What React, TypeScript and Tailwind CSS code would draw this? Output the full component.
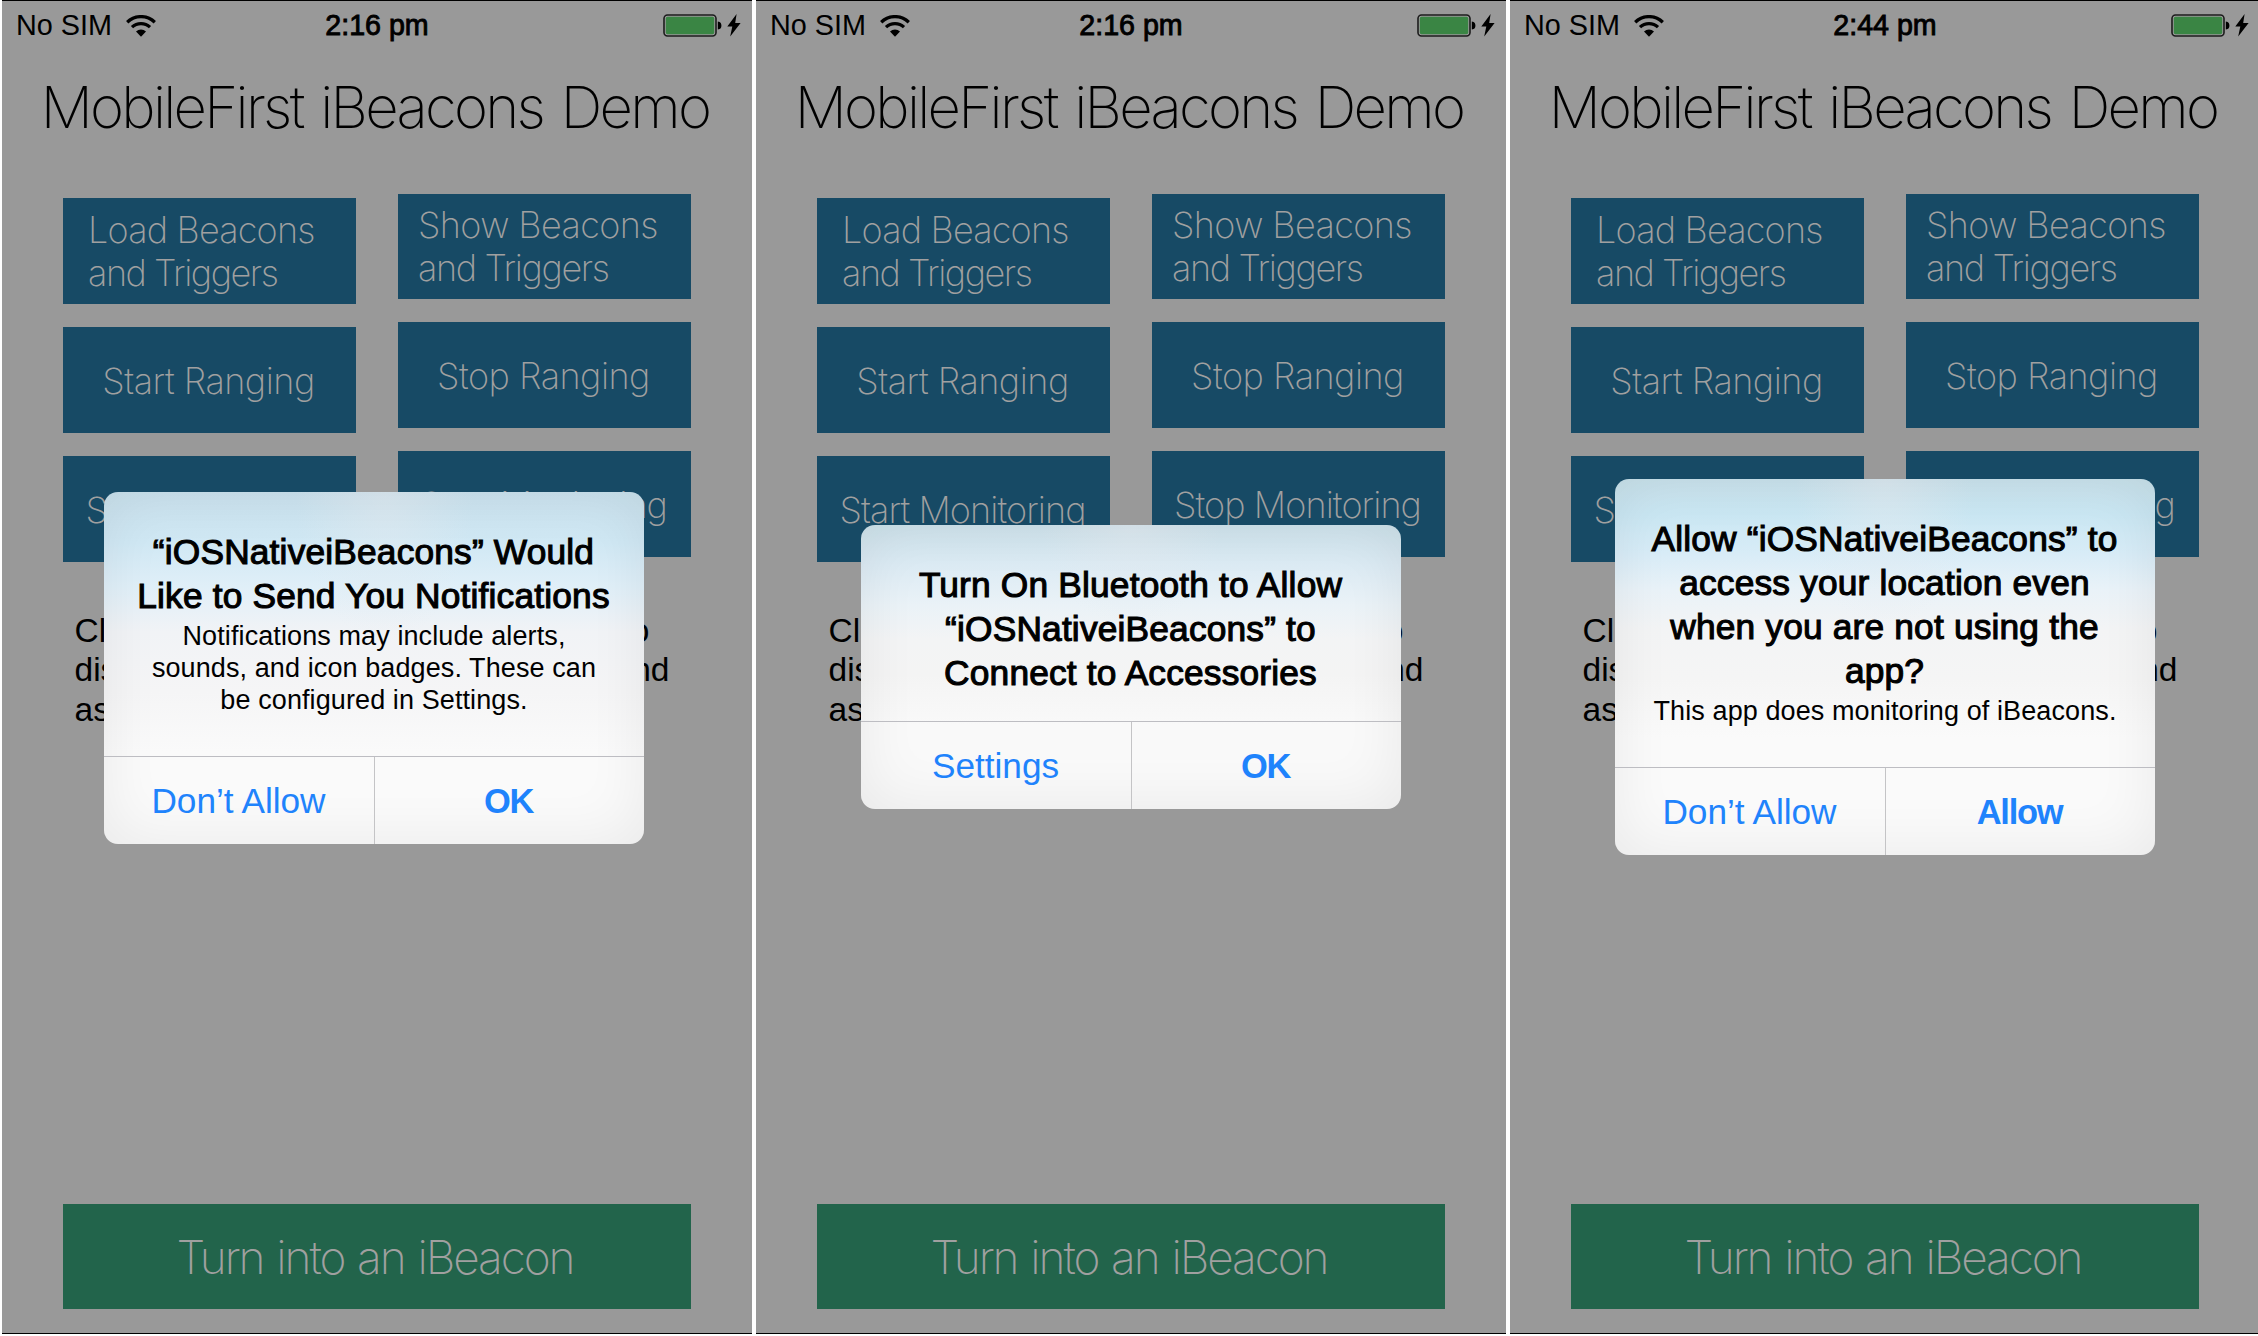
import type { ReactNode } from "react";

function StatusBar({ time }: { time: string }) {
  return (
    <div className="relative flex h-[49px] items-center justify-between pr-[11.5px] pl-[14px] text-[28.8px] leading-[49px]">
      <div className="flex items-center">
        <span>No SIM</span>
        <svg className="ml-[14px] block h-[22px] w-[30px]" viewBox="0 0 30 22">
          <path d="M1.2 7.2a19.8 19.8 0 0 1 27.6 0" fill="none" stroke="black" strokeWidth="3.3" />
          <path d="M6 12.2a13 13 0 0 1 18 0" fill="none" stroke="black" strokeWidth="3.2" />
          <path d="M10 16.6a7.2 7.2 0 0 1 10 0L15 21.8z" fill="black" />
        </svg>
      </div>
      <div className="absolute inset-x-0 text-center text-[28.6px] [-webkit-text-stroke:0.9px_black]">{time}</div>
      <div className="flex items-center">
        <svg className="block h-[23px] w-[59px]" viewBox="0 0 59 23">
          <rect x="1" y="1" width="52" height="21" rx="3.5" fill="#999999" stroke="#1c1c1c" strokeWidth="1.6" />
          <rect x="2.8" y="2.8" width="48.4" height="17.4" rx="1.6" fill="#3a8544" />
          <path d="M54.8 7.4c3 .4 3.6 2 3.6 4.1s-.6 3.7-3.6 4.1z" fill="black" />
        </svg>
        <svg className="ml-[5px] block h-[23px] w-[14px]" viewBox="0 0 14 23">
          <path d="M9.6 0 0.3 12.6h5L3.2 22.6 13.6 9h-5.4z" fill="black" />
        </svg>
      </div>
    </div>
  );
}

function TwoLineButton({ className, children }: { className: string; children: ReactNode }) {
  return <div className={`bg-[#174a65] text-left leading-[43px] ${className}`}>{children}</div>;
}

function BlueButton({ className, label }: { className: string; label: string }) {
  return (
    <div className="flex h-[106px] items-center justify-center bg-[#174a65] pt-[2px] pr-[2px] leading-[43px]">
      <span className={className}>{label}</span>
    </div>
  );
}

function Phone({ time, children }: { time: string; children: ReactNode }) {
  return (
    <section className="relative flex h-[1334px] w-[750px] shrink-0 flex-col overflow-hidden border-y border-black bg-[#999999]">
      <StatusBar time={time} />
      <h1 className="mt-[18px] h-[79px] pr-[4px] text-center font-['Inter',sans-serif] text-[58px] leading-[79px] font-[170] tracking-[-2.7px] [word-spacing:4px] whitespace-nowrap">
        MobileFirst iBeacons Demo
      </h1>
      <div className="flex items-start gap-[42px] pl-[61px] font-['Inter',sans-serif] text-[36px] font-[150] whitespace-nowrap text-[#a0a0a0]">
        <div className="mt-[51px] flex w-[293px] flex-col gap-[23px]">
          <TwoLineButton className="h-[106px] pt-[11px] pl-[25px]">
            <div className="tracking-[-0.8px]">Load Beacons</div>
            <div className="tracking-[-1.45px]">and Triggers</div>
          </TwoLineButton>
          <BlueButton className="tracking-[-0.5px]" label="Start Ranging" />
          <BlueButton className="tracking-[-0.9px]" label="Start Monitoring" />
        </div>
        <div className="mt-[47px] flex w-[293px] flex-col gap-[23px]">
          <TwoLineButton className="h-[105px] pt-[10px] pl-[20px]">
            <div className="tracking-[-0.6px]">Show Beacons</div>
            <div className="tracking-[-1.35px]">and Triggers</div>
          </TwoLineButton>
          <BlueButton className="tracking-[-0.5px]" label="Stop Ranging" />
          <BlueButton className="tracking-[-0.9px]" label="Stop Monitoring" />
        </div>
      </div>
      <div className="mt-[49px] ml-[72.5px] text-[33.5px] leading-[39.4px]">
        <div className="w-[575px] [text-align-last:justify]">Click on the Load Beacons buttons to</div>
        <div className="w-[595px] [text-align-last:justify]">discover the iBeacons around you and</div>
        <div>associated triggers.</div>
      </div>
      <div className="mt-auto mb-[24px] ml-[61px] flex h-[105px] w-[628px] items-center justify-center bg-[#22644b] pr-[4px] font-['Inter',sans-serif] text-[46px] leading-[60px] font-[150] tracking-[-2.1px] [word-spacing:2px] whitespace-nowrap text-[#a0a0a0]">
        Turn into an iBeacon
      </div>
      {children}
    </section>
  );
}

type AlertProps = {
  place: string;
  tint: string;
  title: string[];
  message?: string[];
  cancel: string;
  confirm: string;
};

function Alert({ place, tint, title, message = [], cancel, confirm }: AlertProps) {
  return (
    <div
      className={`absolute flex w-[540px] flex-col overflow-hidden rounded-[14px] text-center whitespace-nowrap text-black ${place} ${tint}`}
    >
      <div className="flex-1 pt-[38px]">
        {title.map((line) => (
          <div key={line} className="h-[44px] pr-[1px] text-[35.3px] leading-[44px] tracking-[0.18px] [-webkit-text-stroke:1.1px_black]">
            {line}
          </div>
        ))}
        <div className="pt-[2px] text-[27px] leading-[32px] tracking-[0.1px]">
          {message.map((line) => (
            <div key={line}>{line}</div>
          ))}
        </div>
      </div>
      <div className="flex h-[88px] border-t border-[#bdbdc2] text-[35.2px] leading-[87px] text-[#1f83fc]">
        <div className="w-[271px] border-r border-[#c4c4c6] pr-[1px]">{cancel}</div>
        <div className="flex-1 pt-px pr-[2px] text-[34.5px] font-bold tracking-[-1.3px]">{confirm}</div>
      </div>
    </div>
  );
}

export default function App() {
  return (
    <main className="flex h-[1336px] w-[2258px] gap-[4px] overflow-hidden bg-white pl-[2px] font-['Liberation_Sans',Arial,sans-serif] text-black">
      <Phone time="2:16 pm">
        <Alert
          place="left-[102px] top-[491px] h-[352px]"
          tint="shadow-[inset_0_0_60px_rgba(0,0,0,0.07)] bg-[radial-gradient(ellipse_90px_150px_at_52%_0,rgba(226,234,240,0.6),transparent),linear-gradient(180deg,#cae2ee_0,#d0e8f4_50px,#e0eff8_95px,#f1f3f6_140px,#f5f5f6_200px,#fafafa_260px,#fafafa_100%)]"
          title={["“iOSNativeiBeacons” Would", "Like to Send You Notifications"]}
          message={["Notifications may include alerts,", "sounds, and icon badges. These can", "be configured in Settings."]}
          cancel="Don’t Allow"
          confirm="OK"
        />
      </Phone>
      <Phone time="2:16 pm">
        <Alert
          place="left-[105px] top-[524px] h-[284px]"
          tint="shadow-[inset_0_0_60px_rgba(0,0,0,0.07)] bg-[radial-gradient(ellipse_90px_100px_at_50%_0,rgba(226,234,240,0.6),transparent),linear-gradient(180deg,#cee3ec_0,#dcebf4_40px,#eaf2f7_80px,#f3f4f5_115px,#f4f4f4_150px,#f9f9f9_200px,#f9f9f9_100%)]"
          title={["Turn On Bluetooth to Allow", "“iOSNativeiBeacons” to", "Connect to Accessories"]}
          cancel="Settings"
          confirm="OK"
        />
      </Phone>
      <Phone time="2:44 pm">
        <Alert
          place="left-[105px] top-[478px] h-[376px]"
          tint="shadow-[inset_0_0_60px_rgba(0,0,0,0.07)] bg-[radial-gradient(ellipse_90px_150px_at_50%_0,rgba(226,234,240,0.6),transparent),linear-gradient(180deg,#c9e2ec_0,#cae7f3_35px,#d8ecf7_75px,#e9f2f8_110px,#f3f4f5_150px,#f5f5f5_200px,#fafafa_260px,#fafafa_100%)]"
          title={["Allow “iOSNativeiBeacons” to", "access your location even", "when you are not using the", "app?"]}
          message={["This app does monitoring of iBeacons."]}
          cancel="Don’t Allow"
          confirm="Allow"
        />
      </Phone>
    </main>
  );
}
